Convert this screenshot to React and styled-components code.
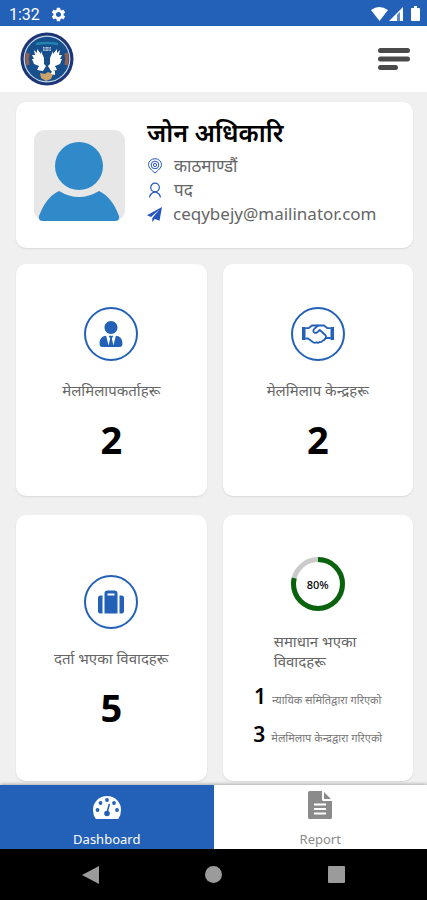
import React from "react";
import styled, { createGlobalStyle } from "styled-components";
import { FaUserTie } from "react-icons/fa";
import { MdSettings } from "react-icons/md";

const blue = "#2360b8";

const GlobalStyle = createGlobalStyle`
  *, *::before, *::after { box-sizing: border-box; }
  body {
    margin: 0;
    background: #f0f0f0;
    color: #000;
    font-family: "Noto Sans", "Noto Sans Devanagari", sans-serif;
  }
  h1, p, ul { margin: 0; padding: 0; }
  svg { display: block; flex: none; }
`;

const Screen = styled.div`
  display: flex;
  flex-direction: column;
  min-height: 100vh;
`;

const StatusBar = styled.div`
  display: flex;
  align-items: center;
  justify-content: space-between;
  height: 26px;
  padding: 2px 7px 0 9px;
  background: ${blue};
  color: #fff;
  font-family: Roboto, sans-serif;
  font-size: 16px;
`;

const StatusGroup = styled.div`
  display: flex;
  align-items: center;
  gap: ${(p) => p.$gap}px;
`;

const Header = styled.header`
  display: flex;
  align-items: center;
  justify-content: space-between;
  height: 66px;
  padding: 0 17px 0 20px;
  background: #fff;
`;

const MenuButton = styled.button`
  padding: 0;
  border: 0;
  background: none;
  color: #4a4a4a;
`;

const Content = styled.main`
  flex: 1;
  display: flex;
  flex-direction: column;
  gap: 16px;
  padding: 10px 14px 4px 16px;
`;

const Card = styled.section`
  border-radius: 10px;
  background: #fff;
  box-shadow: 0 1px 2px rgba(0, 0, 0, 0.1);
`;

const ProfileCard = styled(Card)`
  display: flex;
  align-items: flex-start;
  gap: 22px;
  padding: 14px 18px 22px;
`;

const Avatar = styled.svg`
  width: 91px;
  height: 91px;
  margin-top: 14px;
`;

const ProfileText = styled.div`
  min-width: 0;
`;

const Name = styled.h1`
  margin-bottom: 6px;
  font-size: 25px;
  line-height: 32px;
  font-weight: 600;
`;

const Detail = styled.p`
  display: flex;
  align-items: center;
  gap: 11px;
  color: #666;
  font-size: 17px;
  line-height: 24px;
  svg { color: #2456bd; }
`;

const CardGrid = styled.div`
  display: grid;
  grid-template-columns: 1fr 1fr;
  gap: 19px 16px;
`;

const StatCard = styled(Card)`
  display: flex;
  flex-direction: column;
  align-items: center;
  justify-content: center;
  padding: ${(p) => (p.$detailed ? "42px 16px 32px" : "43px 16px 31px")};
`;

const IconRing = styled.div`
  display: grid;
  place-items: center;
  width: 54px;
  height: 54px;
  border: 2px solid ${blue};
  border-radius: 50%;
  color: ${blue};
`;

const StatLabel = styled.p`
  margin-top: 18px;
  color: #666;
  font-size: 15px;
  line-height: 22px;
`;

const StatValue = styled.p`
  margin-top: 12px;
  font-size: 38px;
  line-height: 52px;
  font-weight: 700;
`;

const SolvedLabel = styled.p`
  width: 88px;
  margin-top: 20px;
  color: #666;
  font-size: 15px;
  line-height: 20px;
`;

const Breakdown = styled.ul`
  display: flex;
  flex-direction: column;
  align-items: center;
  gap: 8px;
  margin-top: 10px;
  list-style: none;
`;

const BreakdownItem = styled.li`
  display: flex;
  align-items: baseline;
  gap: 6px;
  color: #777;
  font-size: 11px;
  line-height: 16px;
  white-space: nowrap;
`;

const Count = styled.strong`
  color: #000;
  font-size: 21px;
  line-height: 30px;
  font-weight: 600;
`;

const Gauge = styled.div`
  display: grid;
  place-items: center;
  > * { grid-area: 1 / 1; }
`;

const Percent = styled.span`
  font-size: 11px;
  font-weight: 500;
`;

const TabBar = styled.nav`
  position: relative;
  display: grid;
  grid-template-columns: 1fr 1fr;
  height: 64px;
  box-shadow: 0 -1px 3px rgba(0, 0, 0, 0.28);
`;

const Tab = styled.a`
  display: flex;
  flex-direction: column;
  align-items: center;
  justify-content: space-between;
  padding: ${(p) => (p.$active ? 9 : 6)}px 0 0;
  background: ${(p) => (p.$active ? blue : "#fff")};
  color: ${(p) => (p.$active ? "#fff" : "#8b8b8b")};
  font-size: 13px;
  line-height: 20px;
  text-decoration: none;
`;

const SystemBar = styled.div`
  display: grid;
  grid-template-columns: repeat(3, 123px);
  justify-content: center;
  align-items: center;
  height: 51px;
  background: #000;
`;

const SystemButton = styled.button`
  display: grid;
  place-items: center;
  height: 100%;
  padding: 0;
  border: 0;
  background: none;
  color: #9b9b9b;
`;

function Emblem() {
  return (
    <svg width="54" height="54" viewBox="0 0 54 54" role="img" aria-label="Emblem">
      <circle cx="27" cy="27" r="26.5" fill="#1b3575" />
      <circle cx="27" cy="27" r="22.800" fill="#164f8c" stroke="#c5d6e8" strokeWidth="1.200" />
      <path d="M16 12q11-2 22 0" fill="none" stroke="#2382ae" strokeWidth="2.500" />
      <path d="M23 15h8v4h-8z" fill="#a8bdd4" />
      <path d="M23 17h8M25 15v4M29 15v4" stroke="#496f9c" strokeWidth="1" />
      <path d="M8 21q-2 6 0 12M46 21q2 6 0 12" fill="none" stroke="#935f50" strokeWidth="3.500" />
      <path d="M14 18l3 3v-4l4 5v-3l3 7v6l2 2-3 5-6-1 2-4-5-2-2-5h2l-2-4h3z" fill="#fff" />
      <path d="M40 18l-3 3v-4l-4 5v-3l-3 7v6l-2 2 3 5 6-1-2-4 5-2 2-5h-2l2-4h-3z" fill="#fff" />
      <path d="M20 41l5 1 3-2 5 2-2 5-5 2-5-3z" fill="#cda36c" />
      <path d="M32 38l3 1v4l-4-1z" fill="#fff" />
    </svg>
  );
}

function StatusIcons() {
  return (
    <svg width="49" height="16" viewBox="0 0 49 16" fill="#fff" aria-hidden="true">
      <path d="M0 4Q8-2 17 4L8.5 15z" />
      <path d="M18 15L32 1v14h-3V6l-3 3v6z" />
      <path d="M26 9l3-3v9h-3z" opacity=".25" />
      <path d="M41 2h2V0h3v2h2q1 0 1 1v11q0 1-1 1h-7q-1 0-1-1V3q0-1 1-1z" />
    </svg>
  );
}

function MenuIcon() {
  return (
    <svg width="32" height="22" viewBox="0 0 32 22" fill="currentColor" aria-hidden="true">
      <rect width="32" height="5" rx="2.500" />
      <rect y="8.500" width="32" height="5" rx="2.500" />
      <rect y="17" width="20" height="5" rx="2.500" />
    </svg>
  );
}

function PinIcon() {
  return (
    <svg width="16" height="16" viewBox="0 0 16 16" fill="none" stroke="currentColor" aria-hidden="true">
      <path d="M8 15C5 12.600 1.500 9.600 1.500 6.700a6.500 6 0 0 1 13 0C14.500 9.600 11 12.600 8 15z" />
      <circle cx="8" cy="7" r="3.800" />
      <circle cx="8" cy="7" r="1.600" />
    </svg>
  );
}

function PersonIcon() {
  return (
    <svg width="16" height="16" viewBox="0 0 16 16" fill="none" stroke="currentColor" strokeWidth="1.200" aria-hidden="true">
      <circle cx="8" cy="5.500" r="4.300" />
      <path d="M2.500 15.500c.3-3 2-4.700 5.500-5.700 3.500 1 5.200 2.700 5.500 5.700" />
    </svg>
  );
}

function PlaneIcon() {
  return (
    <svg width="15" height="15" viewBox="0 0 15 15" fill="currentColor" aria-hidden="true">
      <path d="M15 0L0 8.200l4 1.800L12.500 2.500 5.300 11v4l2.500-3 4.700 1.700z" />
    </svg>
  );
}

function HandshakeIcon() {
  return (
    <svg width="32" height="20" viewBox="0 0 32 20" fill="none" stroke="currentColor" strokeWidth="1.800" strokeLinejoin="round" strokeLinecap="round" aria-hidden="true">
      <path d="M0 3h3.500v13H0zM28.500 3H32v13h-3.500z" fill="currentColor" stroke="none" />
      <path d="M4 4.200h2.500L10 1.500h12l3.500 2.700H28M4 14.500h2l5.500 4q1.500.8 3-.3 1.500 1.200 3.200-.2 2 .5 2.800-1.300 1.800.2 2.300-1.700L24 14h4" />
      <path d="M16 1.500l-4 3.700q-1.500 2 .2 3.200 1.500 1 3-.2l2.600-2.200 5.500 5q1.800 2-.5 4" />
    </svg>
  );
}

function SuitcaseIcon() {
  return (
    <svg width="26" height="24" viewBox="0 0 26 24" fill="currentColor" aria-hidden="true">
      <path fillRule="evenodd" d="M6.500 3.500V23.500h13V3.500q0-3-3-3h-7q-3 0-3 3zM9.500 3.500h7v2h-7z" />
      <path d="M4.500 5.500H2.500Q0 5.500 0 8v13q0 2.500 2.500 2.500h2zM21.500 5.500h2Q26 5.500 26 8v13q0 2.500-2.500 2.500h-2z" />
    </svg>
  );
}

function DashboardIcon() {
  return (
    <svg width="30" height="26" viewBox="0 0 30 26" aria-hidden="true">
      <path d="M3.500 24.500Q1 20.800 1 16a14 14 0 0 1 28 0q0 4.800-2.500 8.500-.4.500-1 .500h-21q-.6 0-1-.500z" fill="#fff" />
      <g fill={blue}>
        <circle cx="5.500" cy="16" r="1.900" /><circle cx="8.500" cy="9" r="1.900" />
        <circle cx="15" cy="6" r="1.900" /><circle cx="22" cy="9" r="1.900" />
        <circle cx="25" cy="16" r="1.900" /><circle cx="15" cy="19.500" r="2.800" />
      </g>
      <path d="M15 19l2.200-8.500" stroke={blue} strokeWidth="1.500" strokeLinecap="round" />
    </svg>
  );
}

function ReportIcon() {
  return (
    <svg width="24" height="28" viewBox="0 0 24 28" aria-hidden="true">
      <path d="M1.500 0H14v8.500q0 1.500 1.500 1.500H24v16.500q0 1.500-1.500 1.500h-21Q0 28 0 26.500v-25Q0 0 1.500 0z" fill="currentColor" />
      <path d="M16 1v7h7z" fill="currentColor" />
      <path d="M6 13.500h12M6 18h12M6 22.500h12" stroke="#fff" strokeWidth="1.800" />
    </svg>
  );
}

function Ring({ value }) {
  return (
    <svg width="54" height="54" viewBox="0 0 54 54" fill="none" strokeWidth="5" aria-hidden="true">
      <circle cx="27" cy="27" r="24.500" stroke="#cbcbcb" />
      <circle cx="27" cy="27" r="24.500" stroke="#09630d" pathLength="100" strokeDasharray={`${value} 100`} transform="rotate(-90 27 27)" />
    </svg>
  );
}

function Stat({ icon, label, value }) {
  return (
    <StatCard>
      <IconRing>{icon}</IconRing>
      <StatLabel>{label}</StatLabel>
      <StatValue>{value}</StatValue>
    </StatCard>
  );
}

export default function App() {
  return (
    <Screen>
      <GlobalStyle />
      <StatusBar>
        <StatusGroup $gap={10}>1:32 <MdSettings size={17} /></StatusGroup>
        <StatusIcons />
      </StatusBar>
      <Header>
        <Emblem />
        <MenuButton type="button" aria-label="Menu"><MenuIcon /></MenuButton>
      </Header>
      <Content>
        <ProfileCard>
          <Avatar viewBox="0 0 91 91" aria-hidden="true">
            <rect width="91" height="91" rx="11" fill="#e7e7e7" />
            <circle cx="45" cy="36" r="24" fill="#3089c8" />
            <path d="M25 61q20 12 40 0Q78 67 85 86q1 5-4 5H9q-5 0-4-5Q12 67 25 61z" fill="#3089c8" />
          </Avatar>
          <ProfileText>
            <Name>जोन अधिकारि</Name>
            <Detail><PinIcon />काठमाण्डौं</Detail>
            <Detail><PersonIcon />पद</Detail>
            <Detail><PlaneIcon />ceqybejy@mailinator.com</Detail>
          </ProfileText>
        </ProfileCard>
        <CardGrid>
          <Stat icon={<FaUserTie size={26} />} label="मेलमिलापकर्ताहरू" value={2} />
          <Stat icon={<HandshakeIcon />} label="मेलमिलाप केन्द्रहरू" value={2} />
          <Stat icon={<SuitcaseIcon />} label="दर्ता भएका विवादहरू" value={5} />
          <StatCard $detailed>
            <Gauge><Ring value={79} /><Percent>80%</Percent></Gauge>
            <SolvedLabel>समाधान भएका विवादहरू</SolvedLabel>
            <Breakdown>
              <BreakdownItem><Count>1</Count>न्यायिक समितिद्वारा गरिएको</BreakdownItem>
              <BreakdownItem><Count>3</Count>मेलमिलाप केन्द्रद्वारा गरिएको</BreakdownItem>
            </Breakdown>
          </StatCard>
        </CardGrid>
      </Content>
      <TabBar>
        <Tab href="#dashboard" $active aria-current="page"><DashboardIcon />Dashboard</Tab>
        <Tab href="#report"><ReportIcon />Report</Tab>
      </TabBar>
      <SystemBar>
        <SystemButton type="button" aria-label="Back">
          <svg width="18" height="18" viewBox="0 0 18 18" fill="currentColor"><path d="M0 9L17 0v18z" /></svg>
        </SystemButton>
        <SystemButton type="button" aria-label="Home">
          <svg width="17" height="17" viewBox="0 0 17 17" fill="currentColor"><circle cx="8.500" cy="8.500" r="8.500" /></svg>
        </SystemButton>
        <SystemButton type="button" aria-label="Recent apps">
          <svg width="17" height="17" viewBox="0 0 17 17" fill="currentColor"><rect width="17" height="17" rx="1" /></svg>
        </SystemButton>
      </SystemBar>
    </Screen>
  );
}
